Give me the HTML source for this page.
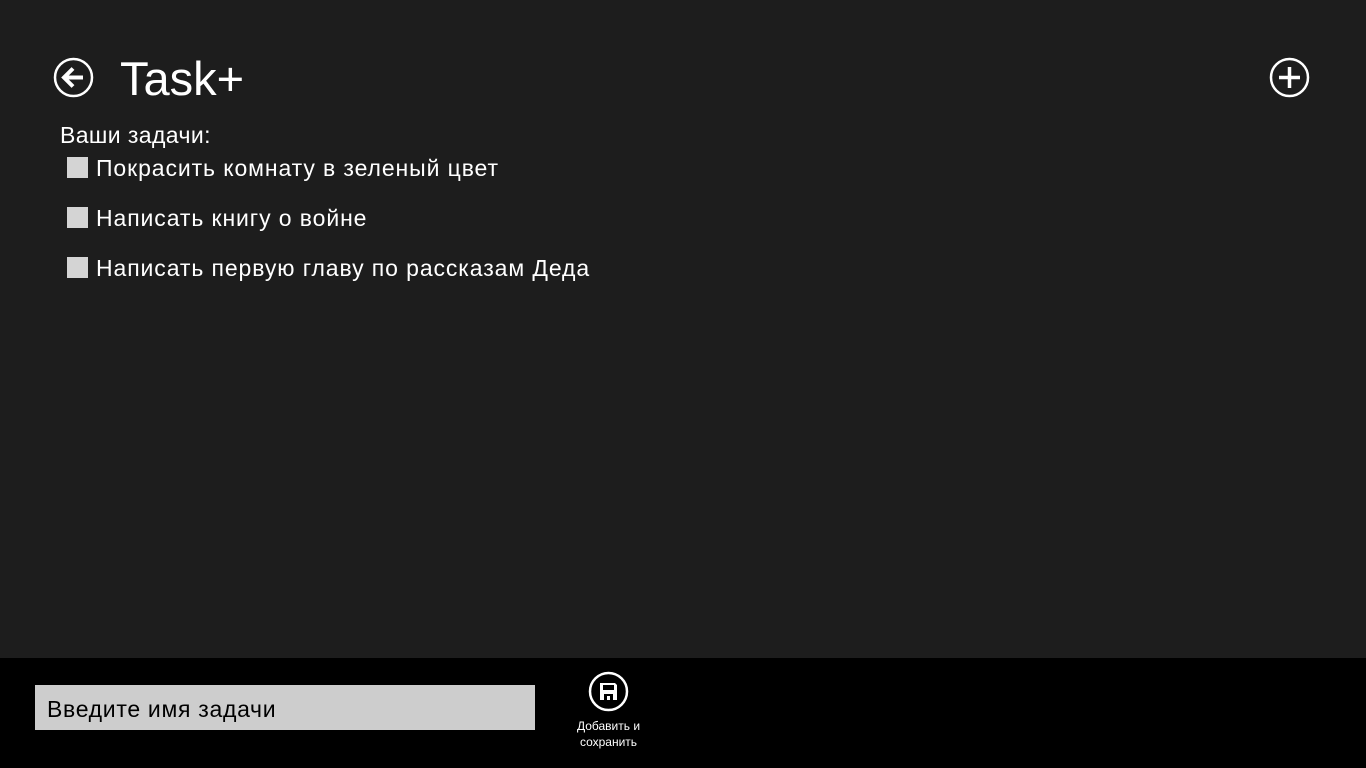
<!DOCTYPE html>
<html><head><meta charset="utf-8"><style>
html,body{margin:0;padding:0;width:1366px;height:768px;overflow:hidden;background:#1d1d1d;font-family:"Liberation Sans","DejaVu Sans",sans-serif;color:#fff}
.abs{position:absolute}
.t{font-size:23px;letter-spacing:0.9px;white-space:nowrap}
.cb{position:absolute;width:21px;height:21px;background:#d4d4d4}
</style></head><body>
<svg class="abs" style="left:53px;top:57px" width="41" height="41" viewBox="0 0 41 41">
<circle cx="20.5" cy="20.5" r="18.5" fill="none" stroke="#fff" stroke-width="2.5"/>
<path d="M11 20.5H30M20 11.5L11 20.5L20 29.5" fill="none" stroke="#fff" stroke-width="4"/>
</svg>
<div class="abs" style="left:120px;top:49px;font-size:47px;line-height:60px">Task+</div>
<svg class="abs" style="left:1269px;top:57px" width="41" height="41" viewBox="0 0 41 41">
<circle cx="20.5" cy="20.5" r="18.5" fill="none" stroke="#fff" stroke-width="2.5"/>
<path d="M20.5 10V31M10 20.5H31" stroke="#fff" stroke-width="3.5"/>
</svg>
<div class="abs t" style="left:60px;top:122px;font-size:23px;letter-spacing:0.4px">Ваши задачи:</div>
<div class="cb" style="left:67px;top:157px"></div>
<div class="abs t" style="left:96px;top:155px">Покрасить комнату в зеленый цвет</div>
<div class="cb" style="left:67px;top:207px"></div>
<div class="abs t" style="left:96px;top:205px">Написать книгу о войне</div>
<div class="cb" style="left:67px;top:257px"></div>
<div class="abs t" style="left:96px;top:255px">Написать первую главу по рассказам Деда</div>
<div class="abs" style="left:0;top:658px;width:1366px;height:110px;background:#000"></div>
<div class="abs" style="left:35px;top:685px;width:500px;height:45px;background:#cdcdcd"></div>
<div class="abs t" style="left:47px;top:696px;color:#000;letter-spacing:0.7px">Введите имя задачи</div>
<svg class="abs" style="left:588px;top:671px" width="41" height="41" viewBox="0 0 41 41">
<circle cx="20.5" cy="20.5" r="18.5" fill="none" stroke="#fff" stroke-width="2.5"/>
<path d="M12 12H27L29 14V29H12Z" fill="#fff"/>
<rect x="15" y="14" width="11" height="5" fill="#000"/>
<rect x="16" y="23" width="9" height="6" fill="#000"/>
<rect x="19" y="25" width="3" height="4" fill="#fff"/>
</svg>
<div class="abs" style="left:558px;top:718px;width:101px;text-align:center;font-size:12px;line-height:16px">Добавить и<br>сохранить</div>
</body></html>
